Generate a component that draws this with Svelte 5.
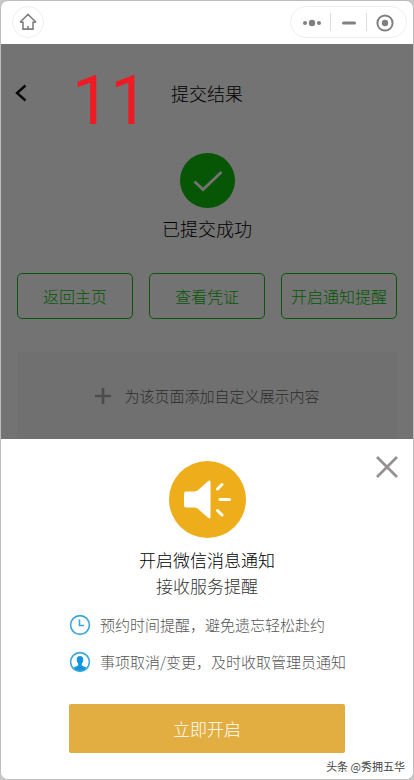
<script>
    const appName = '提交结果';
    const actions = ['返回主页', '查看凭证', '开启通知提醒'];
    const benefits = [
        { icon: 'clock', text: '预约时间提醒，避免遗忘轻松赴约' },
        { icon: 'user', text: '事项取消/变更，及时收取管理员通知' }
    ];
</script>

<div class="window">
    <header class="bar">
        <button class="home" aria-label="主页">
            <svg width="18" height="18" viewBox="0 0 18 18">
                <path d="M1 9.2 9 1.4l8 7.8M1 9.2h3v6.9h10V9.2h3M9 16v-3" />
            </svg>
        </button>
        <div class="capsule">
            <button aria-label="更多">
                <svg width="20" height="20" viewBox="0 0 20 20">
                    <circle class="solid" cx="3" cy="10" r="2" />
                    <circle class="solid" cx="10" cy="10" r="3.2" />
                    <circle class="solid" cx="17" cy="10" r="2" />
                </svg>
            </button>
            <button aria-label="最小化">
                <svg width="20" height="20" viewBox="0 0 20 20">
                    <path class="thick" d="M4.5 10h11" />
                </svg>
            </button>
            <button aria-label="关闭">
                <svg width="20" height="20" viewBox="0 0 20 20">
                    <circle class="ring" cx="10" cy="10" r="7.6" />
                    <circle class="solid" cx="10" cy="10" r="3.2" />
                </svg>
            </button>
        </div>
    </header>

    <main class="page">
        <nav class="nav">
            <button class="back" aria-label="返回">
                <svg width="12" height="18" viewBox="0 0 12 18">
                    <path d="M10.5 1.5 2 9l8.5 7.5" />
                </svg>
            </button>
            <h1>{appName}</h1>
            <span class="step">11</span>
        </nav>

        <section class="result">
            <svg width="55" height="55" viewBox="0 0 55 55">
                <circle cx="27.5" cy="27.5" r="27.5" fill="#065606" />
                <path d="M14.5 28.5 23 36.5 41.5 19" fill="none" stroke="#737373" stroke-width="2.8" />
            </svg>
            <p>已提交成功</p>
        </section>

        <div class="actions">
            {#each actions as action (action)}
                <button>{action}</button>
            {/each}
        </div>

        <div class="custom">
            <svg width="18" height="18" viewBox="0 0 18 18">
                <path d="M9 1v16M1 9h16" fill="none" stroke="#4c4c4c" stroke-width="2.6" />
            </svg>
            <span>为该页面添加自定义展示内容</span>
        </div>
    </main>

    <section class="sheet">
        <button class="close" aria-label="关闭提醒">
            <svg width="24" height="24" viewBox="0 0 24 24">
                <path d="M2 2l20 20M22 2 2 22" fill="none" stroke="#969191" stroke-width="2.8" />
            </svg>
        </button>

        <svg width="77" height="77" viewBox="0 0 77 77">
            <circle cx="38.5" cy="38.5" r="38.5" fill="#eeae1c" />
            <path d="M17 30.5h8q2 0 3.5-1L39 20.2q2.5-1.7 2.5.8v35q0 2.5-2.5.8L28.5 47.5q-1.5-1-3.5-1h-8q-2 0-2-2v-12q0-2 2-2z" fill="#fff" />
            <path d="M48.5 28 53 23.5M51 38.5h9.5M48.5 49.5 53 54" fill="none" stroke="#fff" stroke-width="3" stroke-linecap="round" />
        </svg>

        <h2>开启微信消息通知</h2>
        <p class="subtitle">接收服务提醒</p>

        <ul class="benefits">
            {#each benefits as benefit (benefit.icon)}
                <li>
                    <svg width="22" height="22" viewBox="0 0 22 22">
                        <circle cx="11" cy="11" r="9.4" fill="none" stroke="#3ba5dd" stroke-width="1.6" />
                        {#if benefit.icon === 'clock'}
                            <path d="M10.5 5.5v6H15" fill="none" stroke="#3ba5dd" stroke-width="1.6" />
                        {:else}
                            <path d="M11 5c2.2 0 3.3 1.5 3.3 3.5 0 1.8-.6 3-1.5 3.9v1.8c.6 1.2 3.4 1.4 4.7 2.5A8.8 8.8 0 0 1 11 20a8.8 8.8 0 0 1-6.5-3.3c1.3-1.1 4.1-1.3 4.7-2.5v-1.8c-.9-.9-1.5-2.1-1.5-3.9C7.7 6.5 8.8 5 11 5z" fill="#1296db" />
                        {/if}
                    </svg>
                    <span>{benefit.text}</span>
                </li>
            {/each}
        </ul>

        <button class="enable">立即开启</button>
        <span class="credit">头条 @秀拥五华</span>
    </section>
</div>

<style>
    :global(body) {
        background: #c8c8c8;
        font-family: "Noto Sans CJK SC", sans-serif;
        font-weight: 300;
    }

    .window {
        box-sizing: border-box;
        min-height: 100vh;
        display: flex;
        flex-direction: column;
        border: 1px solid #bdbdbd;
        border-radius: 8px;
        background: #fff;
        overflow: hidden;
    }

    button {
        box-sizing: border-box;
        padding: 0;
        border: 0;
        background: none;
        font: inherit;
        cursor: pointer;
    }

    svg {
        display: block;
        flex: none;
    }

    h1,
    h2,
    p,
    ul {
        margin: 0;
        padding: 0;
        font-weight: 300;
    }

    .bar {
        display: flex;
        align-items: center;
        justify-content: space-between;
        padding: 5px 6px 6px 11px;
    }

    .bar path,
    .ring {
        fill: none;
        stroke: #808080;
        stroke-width: 1.6;
    }

    .bar .ring {
        stroke-width: 2;
    }

    .bar .thick {
        stroke-width: 3;
        stroke-linecap: round;
    }

    .solid {
        fill: #808080;
    }

    .home {
        width: 32px;
        height: 32px;
        display: grid;
        place-items: center;
        border: 1px solid #eee;
        border-radius: 50%;
    }

    .capsule {
        box-sizing: border-box;
        width: 117px;
        height: 32px;
        display: flex;
        align-items: center;
        padding: 0 3px;
        border: 1px solid #eee;
        border-radius: 16px;
    }

    .capsule button {
        flex: 1;
        height: 18px;
        display: grid;
        place-items: center;
    }

    .capsule button + button {
        border-left: 1px solid #ddd;
    }

    .page {
        padding: 0 16px;
        background: #737373;
        color: #000;
    }

    .nav {
        position: relative;
        height: 98px;
        display: flex;
        align-items: center;
        justify-content: space-between;
        margin: 0 -2px;
    }

    .nav h1 {
        flex: 1;
        padding-right: 12px;
        font-size: 18px;
        line-height: 26px;
        text-align: center;
    }

    .back path {
        fill: none;
        stroke: #080808;
        stroke-width: 2.4;
    }

    .step {
        position: absolute;
        top: 23px;
        left: 57px;
        color: #ed1c24;
        font: 68px/68px Roboto, sans-serif;
    }

    .result {
        display: flex;
        flex-direction: column;
        align-items: center;
        gap: 7px;
        padding-top: 11px;
        font-size: 18px;
        line-height: 26px;
    }

    .actions {
        display: grid;
        grid-template-columns: repeat(3, 1fr);
        gap: 16px;
        padding: 32px 0 33px;
    }

    .actions button {
        height: 46px;
        border: 1px solid #0b560b;
        border-radius: 5px;
        color: #065606;
        font-size: 16px;
        white-space: nowrap;
    }

    .custom {
        height: 87px;
        display: flex;
        align-items: center;
        justify-content: center;
        gap: 12px;
        background: #707070;
        color: #2c2c2c;
        font-size: 15px;
    }

    .sheet {
        position: relative;
        flex: 1;
        display: flex;
        flex-direction: column;
        align-items: center;
        padding: 22px 68px 26px;
        background: #fff;
    }

    .close {
        position: absolute;
        top: 16px;
        right: 14px;
    }

    .sheet h2 {
        margin-top: 9px;
        color: #000;
        font-size: 17px;
        line-height: 26px;
    }

    .subtitle {
        color: #333;
        font-size: 17px;
        line-height: 26px;
    }

    .benefits {
        align-self: stretch;
        display: grid;
        gap: 13px;
        margin-top: 14px;
        list-style: none;
        color: #555;
        font-size: 15px;
        line-height: 24px;
        white-space: nowrap;
    }

    .benefits li {
        display: flex;
        align-items: center;
        gap: 9px;
    }

    .enable {
        align-self: stretch;
        height: 49px;
        margin-top: 30px;
        border-radius: 2px;
        background: #e2ae41;
        color: #fff;
        font-size: 17px;
    }

    .credit {
        position: absolute;
        right: 8px;
        bottom: 4px;
        color: #444;
        font-size: 11px;
        font-weight: 400;
        line-height: 18px;
    }
</style>
